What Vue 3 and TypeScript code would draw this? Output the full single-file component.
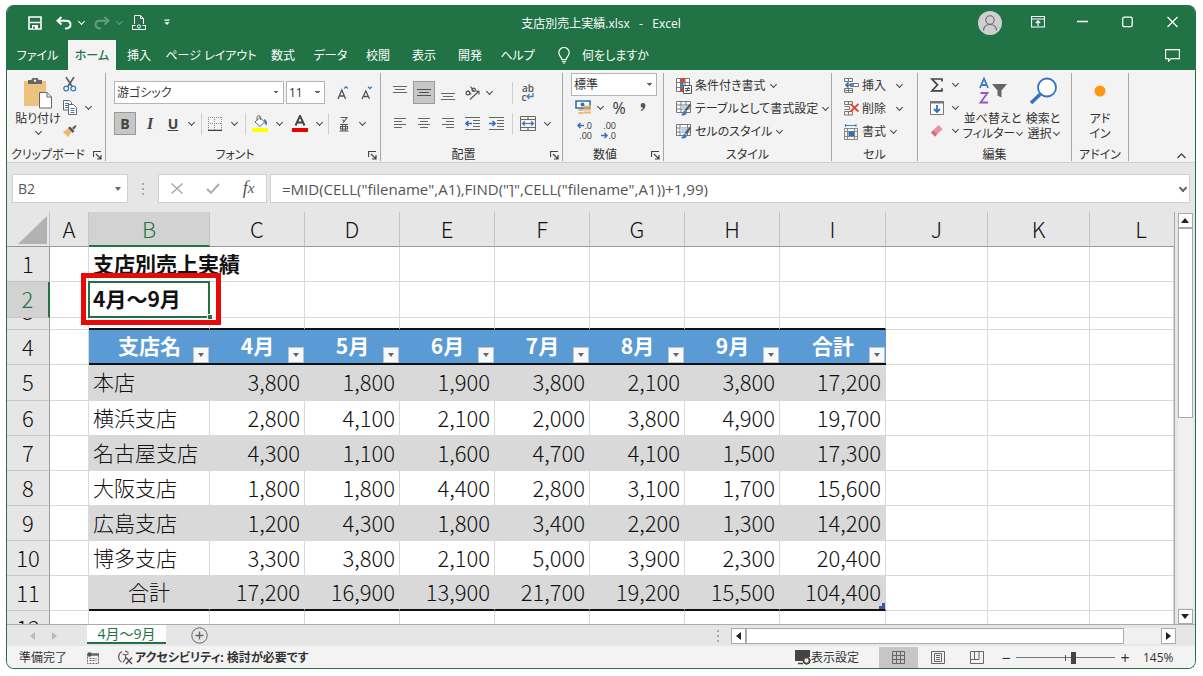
<script setup lang="ts">
import { ref } from 'vue'

interface Row {
  n: number
  cls: string
  cells: string[]
}

const tabs = [
  { label: 'ファイル', cls: 't-file' },
  { label: 'ホーム', cls: 't-home' },
  { label: '挿入', cls: 't-short' },
  { label: 'ページ レイアウト', cls: 't-layout' },
  { label: '数式', cls: 't-short' },
  { label: 'データ', cls: 't-mid' },
  { label: '校閲', cls: 't-short' },
  { label: '表示', cls: 't-short' },
  { label: '開発', cls: 't-short' },
  { label: 'ヘルプ', cls: 't-mid' },
]

const columns = ['A', 'B', 'C', 'D', 'E', 'F', 'G', 'H', 'I', 'J', 'K', 'L']
const blanks = ['', '', '']

const rows: Row[] = [
  { n: 1, cls: 'r-title', cells: ['支店別売上実績', '', '', '', '', '', '', ''] },
  { n: 2, cls: 'r-sub', cells: ['4月～9月', '', '', '', '', '', '', ''] },
  { n: 3, cls: 'r-thin', cells: ['', '', '', '', '', '', '', ''] },
  { n: 4, cls: 'r-head', cells: ['支店名', '4月', '5月', '6月', '7月', '8月', '9月', '合計'] },
  { n: 5, cls: 'r-data band first', cells: ['本店', '3,800', '1,800', '1,900', '3,800', '2,100', '3,800', '17,200'] },
  { n: 6, cls: 'r-data', cells: ['横浜支店', '2,800', '4,100', '2,100', '2,000', '3,800', '4,900', '19,700'] },
  { n: 7, cls: 'r-data band', cells: ['名古屋支店', '4,300', '1,100', '1,600', '4,700', '4,100', '1,500', '17,300'] },
  { n: 8, cls: 'r-data', cells: ['大阪支店', '1,800', '1,800', '4,400', '2,800', '3,100', '1,700', '15,600'] },
  { n: 9, cls: 'r-data band', cells: ['広島支店', '1,200', '4,300', '1,800', '3,400', '2,200', '1,300', '14,200'] },
  { n: 10, cls: 'r-data', cells: ['博多支店', '3,300', '3,800', '2,100', '5,000', '3,900', '2,300', '20,400'] },
  { n: 11, cls: 'r-data band total', cells: ['合計', '17,200', '16,900', '13,900', '21,700', '19,200', '15,500', '104,400'] },
  { n: 12, cls: 'r-last', cells: ['', '', '', '', '', '', '', ''] },
]

const cellName = ref('B2')
const formula = ref('=MID(CELL("filename",A1),FIND("]",CELL("filename",A1))+1,99)')
const zoom = ref(58)
</script>

<template>
  <div class="window">
    <header class="titlebar">
      <div class="quick">
        <button class="qa q-save" aria-label="上書き保存">
          <svg width="14" height="14" viewBox="0 0 14 14" fill="none" stroke="#fff" stroke-width="1.6"><path d="M1 1h12v12H1z" /><path d="M2 6.500h10" stroke-width="1.300" /><path d="M4 9h6v4H4z" fill="#fff" stroke="none" /><path d="M6 10.500v2.500" stroke="#217346" stroke-width="1.500" /></svg>
        </button>
        <button class="qa q-undo" aria-label="元に戻す">
          <svg width="16" height="14" viewBox="0 0 16 14" fill="none" stroke="#fff" stroke-width="2"><path d="M5.500 1L1.500 4.800l4 3.700M2 4.800h8c3 0 4.500 1.700 4.500 3.900S12.500 12.500 9 12.500" /></svg>
          <i class="chev light"></i>
        </button>
        <button class="qa q-undo faded" aria-label="やり直し">
          <svg width="16" height="14" viewBox="0 0 16 14" fill="none" stroke="#fff" stroke-width="2"><path d="M10.500 1l4 3.800-4 3.700M14 4.800H6C3 4.800 1.500 6.500 1.500 8.700S3.500 12.500 7 12.500" /></svg>
          <i class="chev light"></i>
        </button>
        <button class="qa q-doc" aria-label="印刷プレビュー">
          <svg width="14" height="16" viewBox="0 0 14 16" fill="none" stroke="#fff"><path d="M2.500 9V.5h6l3 3V9M8.500.5v3h3" /><path d="M.5 10v4.500h13V10M.5 10.500h3M10.500 10.500h3" /><circle cx="7" cy="11.500" r="1.600" /></svg>
        </button>
        <button class="qa q-more" aria-label="カスタマイズ">
          <svg width="6" height="7" viewBox="0 0 6 7"><path d="M.5.500h5v1.200h-5zM.3 3.200h5.400L3 6z" fill="#fff" /></svg>
        </button>
      </div>
      <div class="doc-title">支店別売上実績.xlsx&nbsp;&nbsp; -&nbsp;&nbsp; Excel</div>
      <div class="sysbtns">
        <button class="avatar" aria-label="アカウント">
          <svg width="24" height="24" viewBox="0 0 24 24" fill="none" stroke="#666" stroke-width="1.100"><circle cx="12" cy="12" r="12" fill="#cfcfcf" stroke="none" /><circle cx="12" cy="9" r="4.200" /><path d="M5.500 19.500c.3-4 3-6 6.500-6s6.200 2 6.500 6" /></svg>
        </button>
        <button class="sys" aria-label="リボンの表示オプション">
          <svg width="14" height="12" viewBox="0 0 14 12" fill="none" stroke="#fff"><path d="M.5.500h13v10.500H.5zM.5 3h13" stroke-width="1.200" /><path d="M7 10V5M4.800 7L7 4.800 9.200 7" stroke-width="1.200" /></svg>
        </button>
        <button class="sys" aria-label="最小化">
          <svg width="11" height="12" viewBox="0 0 11 12"><path d="M0 5.500h11" stroke="#fff" stroke-width="1.300" /></svg>
        </button>
        <button class="sys" aria-label="最大化">
          <svg width="11" height="12" viewBox="0 0 11 12"><rect x=".7" y="1.200" width="9.500" height="9.500" rx="1.500" fill="none" stroke="#fff" stroke-width="1.300" /></svg>
        </button>
        <button class="sys" aria-label="閉じる">
          <svg width="11" height="12" viewBox="0 0 11 12"><path d="M.5 1l10 10M10.500 1l-10 10" stroke="#fff" stroke-width="1.200" /></svg>
        </button>
      </div>
    </header>

    <nav class="tabs">
      <button v-for="t in tabs" :key="t.label" class="tab" :class="t.cls">{{ t.label }}</button>
      <button class="tell">
        <svg width="12" height="17" viewBox="0 0 12 17" fill="none" stroke="#fff" stroke-width="1.200"><path d="M3.800 12.500c0-2.500-3-3.500-3-6.800a5.200 5.200 0 0110.400 0c0 3.300-3 4.300-3 6.800zM4 14.300h4M4.700 16h2.600" /></svg>
        <span>何をしますか</span>
      </button>
      <button class="comment" aria-label="コメント">
        <svg width="15" height="13" viewBox="0 0 15 13" fill="none" stroke="#fff" stroke-width="1.100"><path d="M.6.600h13.800v9H6L3.500 12.300V9.600H.6z" /></svg>
      </button>
    </nav>

    <section class="ribbon">
      <div class="group g-clip">
        <div class="body">
          <button class="big paste">
            <svg width="28" height="31" viewBox="0 0 28 31"><path d="M0 3h22v25H0z" fill="#ecc27e" /><path d="M4 2h3.500a3.500 2.500 0 017 0H18v4H4z" fill="#666" /><circle cx="11" cy="2.800" r="1.200" fill="#eee" /><path d="M15.500 14.500h7.500l4.500 4.500v11h-12z" fill="#fff" stroke="#666" /><path d="M23 14.500V19h4.500" fill="none" stroke="#666" /></svg>
            <span>貼り付け</span>
            <i class="chev"></i>
          </button>
          <div class="stack">
            <button class="ic" aria-label="切り取り">
              <svg width="14" height="15" viewBox="0 0 14 15" fill="none"><path d="M3 0l6.500 10M11 0L4.500 10" stroke="#555" stroke-width="1.500" /><circle cx="3.200" cy="11.500" r="2.400" stroke="#3f7fbf" stroke-width="1.300" /><circle cx="10.300" cy="11.500" r="2.400" stroke="#3f7fbf" stroke-width="1.300" /></svg>
            </button>
            <button class="ic" aria-label="コピー">
              <svg width="14" height="15" viewBox="0 0 14 15" fill="#fff" stroke="#666"><path d="M.5.500h6l2 2V10h-8z" /><path d="M2 3.500h4M2 5.500h4M2 7.500h4" stroke="#3f7fbf" /><path d="M5.500 4.500h5l3 3v7h-8z" /><path d="M7.500 8.500h4M7.500 10.500h4M7.500 12.500h4" stroke="#3f7fbf" /></svg>
              <i class="chev"></i>
            </button>
            <button class="ic" aria-label="書式のコピー">
              <svg width="14" height="13" viewBox="0 0 14 13"><path d="M0 8l5-3.500 3.500 4L5 13z" fill="#ecb870" /><path d="M5 4l2-1.500 4.500 4.500L9.500 9z" fill="#555" /><path d="M9 4l3.500-3 1 1.300L11 5.500z" fill="#555" /></svg>
            </button>
          </div>
        </div>
        <div class="foot"><span>クリップボード</span><button class="launch" aria-label="クリップボードの設定"><svg width="9" height="9" viewBox="0 0 9 9" fill="none" stroke="#444"><path d="M.5 6V.5H8M3 3l4.500 4.500M8 4v4H4" stroke-width="1.200" /></svg></button></div>
      </div>

      <div class="group g-font">
        <div class="body lines">
          <div class="line">
            <select class="box font-name" aria-label="フォント"><option>游ゴシック</option></select>
            <select class="box font-size" aria-label="フォント サイズ"><option>11</option></select>
            <button class="ic w24 grow-first" aria-label="フォント サイズの拡大"><svg width="12" height="14" viewBox="0 0 12 14" fill="none"><path d="M1 13L4.800 4l3.800 9M2.500 10h4.700" stroke="#555" stroke-width="1.300" /><path d="M7 2.500L9 .8l2 1.700" stroke="#3f7fbf" stroke-width="1.400" /></svg></button>
            <button class="ic w24" aria-label="フォント サイズの縮小"><svg width="12" height="14" viewBox="0 0 12 14" fill="none"><path d="M1 13L4.800 5l3.800 8M2.500 10.500h4.700" stroke="#555" stroke-width="1.300" /><path d="M7 .800l2 1.700 2-1.700" stroke="#3f7fbf" stroke-width="1.400" /></svg></button>
          </div>
          <div class="line">
            <button class="ic w22 pressed letter"><b>B</b></button>
            <button class="ic w28 letter ital"><b>I</b></button>
            <button class="ic w18 letter under"><b>U</b></button>
            <button class="ic w18" aria-label="下線の種類"><i class="chev"></i></button>
            <span class="vsep"></span>
            <button class="ic w24" aria-label="罫線"><svg width="14" height="14" viewBox="0 0 14 14" fill="none" stroke="#888"><path d="M.5 0v13M6.500 0v13M13.500 0v13M0 .5h14M0 6.500h14" stroke-dasharray="1 1" /><path d="M0 13.300h14" stroke="#444" stroke-width="1.200" /></svg></button>
            <button class="ic w14" aria-label="罫線の種類"><i class="chev"></i></button>
            <span class="vsep c-sep"></span>
            <button class="ic w24 fill" aria-label="塗りつぶしの色"><svg width="16" height="17" viewBox="0 0 16 17"><path d="M3 7l5-4.500 4.500 4.500L8 11.500z" fill="#fff" stroke="#666" /><path d="M5 5V2.500a1.800 1.800 0 013.600 0V5" fill="none" stroke="#666" /><path d="M12 4c3 1 3.500 3.500 2.500 6.500-1.500-1-2.500-3-2.500-6.500z" fill="#3f7fbf" /><path d="M0 13h16v4H0z" fill="#ff0" /></svg></button>
            <button class="ic w14" aria-label="塗りつぶしの色の選択"><i class="chev"></i></button>
            <button class="ic w28" aria-label="フォントの色"><svg width="16" height="17" viewBox="0 0 16 17"><path d="M3.500 10.500L8 .8l4.500 9.700M5 7.500h6" fill="none" stroke="#444" stroke-width="1.900" /><path d="M0 13h16v4H0z" fill="#e80000" /></svg></button>
            <button class="ic w10" aria-label="フォントの色の選択"><i class="chev"></i></button>
            <span class="vsep c-sep"></span>
            <button class="ic w26" aria-label="ふりがな"><svg width="10" height="16" viewBox="0 0 10 16" fill="none" stroke="#555" stroke-width="1.100"><path d="M1.500 1.500h6.500L4 7M3.500 3.500L5.500 6M1 8.500h8M3.500 8.500v6M6.500 8.500v6M1.500 10.500h7v2.500h-7zM.5 15h9" /></svg></button>
            <button class="ic w10" aria-label="ふりがなの設定"><i class="chev"></i></button>
          </div>
        </div>
        <div class="foot"><span>フォント</span><button class="launch" aria-label="フォントの設定"><svg width="9" height="9" viewBox="0 0 9 9" fill="none" stroke="#444"><path d="M.5 6V.5H8M3 3l4.500 4.500M8 4v4H4" stroke-width="1.200" /></svg></button></div>
      </div>

      <div class="group g-align">
        <div class="body lines">
          <div class="line">
            <button class="ic w24" aria-label="上揃え"><svg width="14" height="14" viewBox="0 0 14 14" stroke="#666"><path d="M0 .5h14M2 3.500h10M0 6.500h14" /></svg></button>
            <button class="ic w24 pressed" aria-label="上下中央揃え"><svg width="14" height="14" viewBox="0 0 14 14" stroke="#555"><path d="M0 3.500h14M2 6.500h10M0 9.500h14" /></svg></button>
            <button class="ic w24" aria-label="下揃え"><svg width="14" height="14" viewBox="0 0 14 14" stroke="#666"><path d="M0 7.500h14M2 10.500h10M0 13.500h14" /></svg></button>
            <button class="ic w24" aria-label="方向"><svg width="15" height="14" viewBox="0 0 15 14" fill="none" stroke="#555" stroke-width="1.200"><path d="M5 13.500L14 5M14 5h-3.500M14 5v3.500" /><circle cx="3" cy="7" r="1.900" /><path d="M3 4.500l3.200 4M5.500.500l3.500 5" /><circle cx="8.700" cy="3.800" r="1.700" /></svg></button>
            <button class="ic w10" aria-label="方向の選択"><i class="chev"></i></button>
            <span class="vsep a-sep"></span>
            <button class="ic w28 wrap" aria-label="折り返して全体を表示する"><span>ab</span><span>c<svg width="8" height="7" viewBox="0 0 8 7" fill="none" stroke="#3f7fbf" stroke-width="1.300"><path d="M7 0v3.500H1M3.500 1L1 3.500 3.500 6" /></svg></span></button>
          </div>
          <div class="line">
            <button class="ic w24" aria-label="左揃え"><svg width="12" height="11" viewBox="0 0 12 11" stroke="#666"><path d="M0 .5h12M0 3.500h8M0 6.500h12M0 9.500h8" /></svg></button>
            <button class="ic w24" aria-label="中央揃え"><svg width="12" height="11" viewBox="0 0 12 11" stroke="#666"><path d="M0 .5h12M2 3.500h8M0 6.500h12M2 9.500h8" /></svg></button>
            <button class="ic w24" aria-label="右揃え"><svg width="12" height="11" viewBox="0 0 12 11" stroke="#666"><path d="M0 .5h12M4 3.500h8M0 6.500h12M4 9.500h8" /></svg></button>
            <button class="ic w24" aria-label="インデントを減らす"><svg width="15" height="13" viewBox="0 0 15 13" fill="none" stroke="#666"><path d="M0 .5h15M8 3.500h7M8 6.500h7M8 9.500h7M0 12.500h15" /><path d="M7 6.500H1M3.500 4L1 6.500 3.500 9" stroke="#2f6fb5" stroke-width="1.700" /></svg></button>
            <button class="ic w24" aria-label="インデントを増やす"><svg width="15" height="13" viewBox="0 0 15 13" fill="none" stroke="#666"><path d="M0 .5h15M8 3.500h7M8 6.500h7M8 9.500h7M0 12.500h15" /><path d="M0 6.500h6M3.500 4L6 6.500 3.500 9" stroke="#2f6fb5" stroke-width="1.700" /></svg></button>
            <span class="vsep b-sep"></span>
            <button class="ic w28" aria-label="セルを結合して中央揃え"><svg width="16" height="15" viewBox="0 0 16 15" fill="none" stroke="#666"><path d="M.5.500h15v14H.5zM.5 3.500h15M.5 11.500h15M8 .5v3M8 11.500v3" /><path d="M2.500 7.500h11M5 5.500l-2.500 2 2.500 2M11 5.500l2.500 2-2.500 2" stroke="#2f6fb5" stroke-width="1.200" /></svg></button>
            <button class="ic w10" aria-label="結合の選択"><i class="chev"></i></button>
          </div>
        </div>
        <div class="foot"><span>配置</span><button class="launch" aria-label="配置の設定"><svg width="9" height="9" viewBox="0 0 9 9" fill="none" stroke="#444"><path d="M.5 6V.5H8M3 3l4.500 4.500M8 4v4H4" stroke-width="1.200" /></svg></button></div>
      </div>

      <div class="group g-num">
        <div class="body thirds">
          <select class="box num-format" aria-label="数値の書式"><option>標準</option></select>
          <div class="line3">
            <button class="ic w24" aria-label="通貨表示形式"><svg width="16" height="15" viewBox="0 0 16 15" fill="none"><path d="M1 1h14v7H1z" stroke="#2f6fb5" stroke-width="1.600" fill="#fff" /><circle cx="7.500" cy="4.500" r="2" fill="#2f6fb5" /><path d="M9 5.500h7v2H9zM9 8.500h7v2H9zM9 11.500h7v2H9zM3.500 9h5v2h-5zM3.500 12h5v2h-5z" fill="#ecb870" /></svg></button>
            <button class="ic w10" aria-label="通貨の選択"><i class="chev"></i></button>
            <button class="ic w28 pct">%</button>
            <button class="ic w20" aria-label="桁区切りスタイル"><svg width="6" height="9" viewBox="0 0 6 9"><path d="M3 0a2.400 2.400 0 012.400 2.600C5.400 5.500 3.500 7.500 1 8l-.3-1C2 6.500 2.800 5.700 3 4.800A2.400 2.400 0 113 0z" fill="#555" /></svg></button>
          </div>
          <div class="line3">
            <button class="ic w24 dec"><span><svg width="7" height="7" viewBox="0 0 7 7" fill="none" stroke="#2f6fb5" stroke-width="1.500"><path d="M7 3.500H1M3.500 1L1 3.500 3.500 6" /></svg>.0</span><span>.00</span></button>
            <button class="ic w24 dec"><span>.00</span><span><svg width="7" height="7" viewBox="0 0 7 7" fill="none" stroke="#2f6fb5" stroke-width="1.500"><path d="M0 3.500h6M3.500 1L6 3.500 3.500 6" /></svg>.0</span></button>
          </div>
        </div>
        <div class="foot"><span>数値</span><button class="launch" aria-label="数値の設定"><svg width="9" height="9" viewBox="0 0 9 9" fill="none" stroke="#444"><path d="M.5 6V.5H8M3 3l4.500 4.500M8 4v4H4" stroke-width="1.200" /></svg></button></div>
      </div>

      <div class="group g-style">
        <div class="body thirds">
          <button class="row-btn"><svg width="16" height="16" viewBox="0 0 16 16" fill="none" stroke="#777"><path d="M.5.500h13v13H.5zM.5 4.500h13M.5 9.500h13M4.500.500v13M9 .5v13" fill="#fff" /><path d="M4.500 0v4.500H9V0zM4.500 9.500h3v4h-3z" fill="#d9482b" stroke="none" /><path d="M4.500 4.500h3v5h-3z" fill="#3f7fbf" stroke="none" /><path d="M7.500 7.500h8v8h-8z" fill="#fff" stroke="#555" /><path d="M9 10.500h5M9 12.500h5M12.500 9l-2 5" stroke="#555" /></svg><span>条件付き書式</span><i class="chev"></i></button>
          <button class="row-btn"><svg width="16" height="16" viewBox="0 0 16 16" fill="none" stroke="#777"><path d="M.5.500h14v11H.5zM.5 4h14M.5 8h14M5 .5v11M10 .5v11" fill="#fff" /><path d="M5 4.500h7V8H5z" fill="#b9d4ef" stroke="none" /><path d="M14.500 3.500L9.500 9.500" stroke="#555" stroke-width="2" /><path d="M5 14c1.500-.5 1.500-4 4-4.500l2 2c-.5 2.500-3 4-6 2.500z" fill="#3f7fbf" stroke="none" /></svg><span>テーブルとして書式設定</span><i class="chev"></i></button>
          <button class="row-btn"><svg width="16" height="16" viewBox="0 0 16 16" fill="none" stroke="#777"><path d="M.5.500h14v11H.5zM.5 4h14M.5 8h14M4 .5v11M11.500 .5v11" fill="#fff" /><path d="M4 3.500h7.500V8.500H4z" fill="#b9d4ef" stroke="none" /><path d="M14.500 3.500L9.500 9.500" stroke="#555" stroke-width="2" /><path d="M5 14c1.500-.5 1.500-4 4-4.500l2 2c-.5 2.500-3 4-6 2.500z" fill="#3f7fbf" stroke="none" /></svg><span>セルのスタイル</span><i class="chev"></i></button>
        </div>
        <div class="foot"><span>スタイル</span></div>
      </div>

      <div class="group g-cell">
        <div class="body thirds">
          <button class="row-btn"><svg width="15" height="15" viewBox="0 0 15 15" fill="none" stroke="#777"><path d="M.5.500h8v3h-8zM4.500.500v3M.5 10.500h8v4h-8zM4.500 10.500v4M.5 12.500h8" /><path d="M6.500 5.500h8v3h-8z" fill="#fff" /><path d="M10 7H2M4.500 4.500L2 7l2.500 2.500" stroke="#2f6fb5" stroke-width="1.600" /></svg><span>挿入</span><i class="chev far"></i></button>
          <button class="row-btn"><svg width="15" height="15" viewBox="0 0 15 15" fill="none" stroke="#777"><path d="M.5.500h8v3h-8zM4.500.500v3M.5 10.500h8v3.500h-8zM4.500 10.500v3.500M.5 5.500h5v3h-5" /><path d="M6.500 3l8 7.500M14.500 3l-8 7.500" stroke="#d9482b" stroke-width="1.800" /></svg><span>削除</span><i class="chev far"></i></button>
          <button class="row-btn"><svg width="15" height="16" viewBox="0 0 15 16" fill="none" stroke="#888"><path d="M1 1.500h11M1.500 0v3M12 0v3" stroke="#3f7fbf" /><path d="M.5 4.500h13v11H.5zM.5 7.500h13M.5 12.500h13M3.500 4.500v11M10.500 4.500v11" /><path d="M4.500 7.500h5.500v4.500h-5.500z" fill="#2f6fb5" stroke="none" /></svg><span>書式</span><i class="chev"></i></button>
        </div>
        <div class="foot"><span>セル</span></div>
      </div>

      <div class="group g-edit">
        <div class="body">
          <div class="stack">
            <button class="ic" aria-label="合計"><svg width="14" height="14" viewBox="0 0 14 14" fill="none" stroke="#444" stroke-width="1.700"><path d="M12 3.500V1H2l5.500 5.800L2 12.800h10v-2.500" /></svg><i class="chev"></i></button>
            <button class="ic" aria-label="フィル"><svg width="14" height="14" viewBox="0 0 14 14" fill="none"><path d="M.5.500h13v13H.5z" stroke="#777" fill="#fff" /><path d="M0 1.500h14" stroke="#777" stroke-width="2" /><path d="M7 4v7M4 8l3 3 3-3" stroke="#2f6fb5" stroke-width="1.800" /></svg><i class="chev"></i></button>
            <button class="ic" aria-label="クリア"><svg width="14" height="14" viewBox="0 0 14 14"><path d="M1 8.500L8.500 1l4 4L5 12.500z" fill="#e98fa0" /><path d="M1 8.500l2-2 4 4-2 2z" fill="#d8637d" /></svg><i class="chev"></i></button>
          </div>
          <button class="big sort">
            <svg width="29" height="28" viewBox="0 0 29 28" fill="none"><path d="M2 11L6 1.500 10 11M3.300 8h5.400" stroke="#3f7fbf" stroke-width="1.800" /><path d="M2.500 16h7L2.500 25.500h7.500" stroke="#9557c2" stroke-width="1.800" /><path d="M14 7h15l-5.500 6.500v7l-4-2v-5z" fill="#666" /></svg>
            <span>並べ替えと</span>
            <span>フィルター <i class="chev"></i></span>
          </button>
          <button class="big find">
            <svg width="29" height="28" viewBox="0 0 29 28" fill="none" stroke="#2f74bd"><circle cx="18" cy="10.500" r="9" fill="#fff" stroke-width="1.800" /><path d="M11.500 17L2 26" stroke-width="3.600" /></svg>
            <span>検索と</span>
            <span>選択 <i class="chev"></i></span>
          </button>
        </div>
        <div class="foot"><span>編集</span></div>
      </div>

      <div class="group g-addin">
        <div class="body">
          <button class="big addin">
            <svg width="12" height="28" viewBox="0 0 12 28"><circle cx="6" cy="14" r="5.500" fill="#ff9811" /></svg>
            <span>アド</span>
            <span>イン</span>
          </button>
        </div>
        <div class="foot"><span>アドイン</span></div>
      </div>
      <button class="collapse" aria-label="リボンを折りたたむ"><svg width="9" height="6" viewBox="0 0 9 6" fill="none" stroke="#444" stroke-width="1.300"><path d="M.5 5L4.500 1l4 4" /></svg></button>
    </section>

    <section class="fbar">
      <div class="namebox">
        <input v-model="cellName" aria-label="名前ボックス" />
        <button aria-label="名前の一覧"><i class="tri"></i></button>
      </div>
      <span class="dots"></span>
      <div class="fxbox">
        <button aria-label="キャンセル"><svg width="12" height="11" viewBox="0 0 12 11" stroke="#aaa" stroke-width="1.500"><path d="M.5.500l11 10M11.500.500l-11 10" /></svg></button>
        <button aria-label="入力"><svg width="14" height="11" viewBox="0 0 14 11" fill="none" stroke="#aaa" stroke-width="1.900"><path d="M1 6l4 3.800L13 1" /></svg></button>
        <button class="fx"><i>f</i><i class="small">x</i></button>
      </div>
      <div class="formula">
        <input v-model="formula" aria-label="数式バー" />
        <button aria-label="数式バーの展開"><i class="chev bold"></i></button>
      </div>
    </section>

    <main class="sheet">
      <div class="gridwrap">
        <table class="grid">
          <colgroup>
            <col class="c-row" /><col class="c-a" /><col class="c-b" />
            <col v-for="k in 6" :key="k" class="c-m" />
            <col class="c-i" /><col class="c-j" /><col class="c-j" /><col />
          </colgroup>
          <thead>
            <tr>
              <th class="corner"><svg width="29" height="28" viewBox="0 0 29 28"><path d="M29 0v28H0z" fill="#b2b2b2" /></svg></th>
              <th v-for="c in columns" :key="c" scope="col" :class="{ sel: c === 'B', lastcol: c === 'L' }">{{ c }}</th>
            </tr>
          </thead>
          <tbody>
            <tr v-for="r in rows" :key="r.n" :class="r.cls">
              <th scope="row"><div class="in">{{ r.n }}</div></th>
              <td></td>
              <td v-for="(v, i) in r.cells" :key="i" class="t">
                <div class="in">{{ v }}</div>
                <button v-if="r.n === 4" class="filter" :aria-label="v + 'の絞り込み'"><i class="tri"></i></button>
                <template v-if="r.n === 2 && i === 0">
                  <span class="cursor"></span>
                  <span class="handle"></span>
                  <span class="mark"></span>
                </template>
                <svg v-if="r.n === 11 && i === 7" class="corner-mark" width="6" height="6" viewBox="0 0 6 6"><path d="M3 0h3v6H0V3h3z" fill="#4454a5" /></svg>
              </td>
              <td v-for="(b, i) in blanks" :key="'b' + i">{{ b }}</td>
            </tr>
          </tbody>
        </table>
      </div>
      <div class="vscroll">
        <button aria-label="上へ"><i class="arrow up"></i></button>
        <div class="track"><div class="thumb"></div></div>
        <button aria-label="下へ"><i class="arrow down"></i></button>
      </div>
    </main>

    <section class="sheetbar">
      <button class="nav" aria-label="前のシート"><i class="arrow left dim"></i></button>
      <button class="nav" aria-label="次のシート"><i class="arrow right dim"></i></button>
      <button class="sheet-tab">4月～9月</button>
      <button class="add" aria-label="新しいシート"><svg width="17" height="17" viewBox="0 0 17 17" fill="none" stroke="#666"><circle cx="8.500" cy="8.500" r="7.700" /><path d="M8.500 4.500v8M4.500 8.500h8" stroke-width="1.400" /></svg></button>
      <span class="dots"></span>
      <div class="hscroll">
        <button aria-label="左へ"><i class="arrow left"></i></button>
        <div class="htrack"><div class="hthumb"></div></div>
        <button aria-label="右へ"><i class="arrow right"></i></button>
      </div>
    </section>

    <footer class="status">
      <span class="ready">準備完了</span>
      <svg class="macro" width="12" height="12" viewBox="0 0 12 12" fill="none" stroke="#666"><path d="M.5 2.500h11v9H.5zM2.500 6.500h7M2.500 8.500h7" stroke-dasharray="2 1" /><path d="M4 2.500h8" stroke-width="2.500" /><circle cx="2.500" cy="2.500" r="2.300" fill="#555" stroke="none" /></svg>
      <button class="a11y">
        <svg width="17" height="15" viewBox="0 0 17 15" fill="none" stroke="#555" stroke-width="1.100"><path d="M5 1.500A6 6 0 004.500 12M8 1a6 6 0 013.500 2" /><path d="M5.500 4l3 1 3-1M8.500 5v3.500L6 12.500" /><path d="M9 7.500l6 6.500M15 7.500L9 14" stroke-width="1.500" /></svg>
        <span>アクセシビリティ: 検討が必要です</span>
      </button>
      <button class="display">
        <svg width="16" height="15" viewBox="0 0 16 15"><path d="M0 0h15v7H9v4H0z" fill="#444" /><path d="M3 13.500h5" stroke="#444" stroke-width="1.500" /><circle cx="11.500" cy="10.500" r="3" fill="#f3f3f3" stroke="#444" stroke-width="1.500" /><path d="M11.500 6.300v2M11.500 13v2M7.500 10.500h2M13.800 10.500h2M8.800 7.800l1 1M13.500 12.500l1 1M14.200 7.800l-1 1M8.800 13.200l1-1" stroke="#444" stroke-width="1.300" /></svg>
        <span>表示設定</span>
      </button>
      <button class="view on" aria-label="標準"><svg width="13" height="13" viewBox="0 0 13 13" fill="none" stroke="#666"><path d="M.5.500h12v12H.5zM.5 4.500h12M.5 8.500h12M4.500.500v12M8.500.500v12" /></svg></button>
      <button class="view" aria-label="ページ レイアウト"><svg width="14" height="13" viewBox="0 0 14 13" fill="none" stroke="#666"><path d="M.5.500h13v12H.5zM3.500 2.500h7v8h-7zM5 4.500h4M5 6.500h4M5 8.500h4" /></svg></button>
      <button class="view" aria-label="改ページ プレビュー"><svg width="14" height="13" viewBox="0 0 14 13" fill="none" stroke="#666"><path d="M.5.500h13v12H.5zM.5 8.500h8.500V.5M4.500.500v8" /></svg></button>
      <button class="zm">−</button>
      <input v-model="zoom" class="range" type="range" min="0" max="100" aria-label="ズーム" />
      <button class="zm">+</button>
      <span class="pct145">145%</span>
    </footer>
  </div>
</template>

<style>
html, body, #app { height: 100%; }
body { margin: 0; background: #fff; }
#app { display: flow-root; }
</style>

<style scoped>
* { box-sizing: border-box; }
.window {
  --green: #217346;
  height: calc(100% - 12px);
  margin: 5px 7px 7px 6px;
  border: 1px solid var(--green);
  border-top: 0;
  border-radius: 8px;
  overflow: hidden;
  display: flex;
  flex-direction: column;
  background: #e6e6e6;
  color: #333;
  font: 12px/16px "Open Sans", "Noto Sans CJK JP", sans-serif;
  font-feature-settings: "palt";
}
button, input, select { font: inherit; font-feature-settings: inherit; color: inherit; border: 0; padding: 0; margin: 0; background: none; }
button { display: flex; align-items: center; justify-content: center; white-space: nowrap; flex: none; }
svg { display: block; flex: none; }
input { min-width: 0; outline: 0; }

.chev { width: 5px; height: 5px; flex: none; border: solid #444; border-width: 0 1px 1px 0; transform: translateY(-1px) rotate(45deg); display: inline-block; }
.chev.light { border-color: #fff; }
.chev.bold { border-width: 0 2px 2px 0; width: 6px; height: 6px; border-color: #666; }
.tri { border: 3px solid transparent; border-top: 4px solid #666; border-bottom: 0; }
.arrow { border: 4px solid transparent; }
.arrow.up { border-bottom: 5px solid #222; border-top: 0; }
.arrow.down { border-top: 5px solid #222; border-bottom: 0; }
.arrow.left { border-right: 5px solid #222; border-left: 0; }
.arrow.right { border-left: 5px solid #222; border-right: 0; }
.arrow.left.dim { border-right-color: #bbb; }
.arrow.right.dim { border-left-color: #bbb; }

.titlebar { background: var(--green); color: #fff; height: 35px; flex: none; display: grid; grid-template-columns: 1fr auto 1fr; align-items: center; }
.quick { display: flex; align-items: center; padding-left: 21px; }
.qa { height: 24px; gap: 7px; }
.q-save { margin-right: 14px; }
.q-undo { margin-right: 10px; }
.q-doc { margin: 0 18px 0 0; }
.faded { opacity: .3; }
.doc-title { padding-top: 2px; }
.sysbtns { display: flex; justify-content: flex-end; align-items: center; }
.sys { width: 45px; height: 32px; padding-bottom: 2px; }
.avatar { margin-right: 13px; }

.tabs { background: var(--green); color: #fff; height: 30px; flex: none; display: flex; align-items: stretch; }
.tab { height: 30px; padding-top: 1px; }
.t-file { width: 61px; }
.t-home { width: 48px; background: #f3f3f3; color: var(--green); font-weight: 500; }
.t-short { width: 46px; }
.t-mid { width: 49px; }
.t-layout { width: 98px; }
.tell { margin-left: 16px; gap: 12px; padding-top: 1px; }
.comment { margin-left: auto; width: 46px; }

.ribbon { background: #f3f3f3; height: 93px; flex: none; display: flex; border-bottom: 1px solid #d0d0d0; }
.group { margin: 3px 0 1px; border-right: 1px solid #a8a8a8; display: flex; flex-direction: column; flex: none; }
.body { flex: 1; display: flex; }
.foot { height: 12px; display: flex; align-items: center; line-height: 12px; }
.foot span { flex: 1; text-align: center; white-space: nowrap; }
.launch { width: 16px; height: 12px; }
.g-clip { width: 99px; }
.g-font { width: 275px; }
.g-align { width: 182px; }
.g-num { width: 101px; }
.g-style { width: 168px; }
.g-cell { width: 86px; }
.g-edit { width: 154px; }
.g-addin { width: 57px; }
.big { flex-direction: column; justify-content: flex-start; line-height: 15px; }
.big span { display: flex; align-items: center; gap: 2px; }
.paste { width: 46px; margin: 5px 2px 0 8px; }
.paste span { margin: 2px 0 4px; }
.stack { display: flex; flex-direction: column; align-items: flex-start; width: 38px; }
.stack .ic { height: 23px; gap: 9px; }
.ic { height: 23px; }
.w10 { width: 10px; } .w14 { width: 14px; } .w18 { width: 18px; } .w20 { width: 20px; } .w22 { width: 22px; }
.w24 { width: 24px; } .w26 { width: 26px; } .w28 { width: 28px; }
.lines { flex-direction: column; padding: 8px 0 0 7px; gap: 8px; }
.g-font .lines { padding-left: 8px; }
.line, .line3 { display: flex; align-items: center; height: 23px; }
.thirds { flex-direction: column; padding: 0 0 0 8px; }
.box {
  flex: none; height: 23px; border: 1px solid #b5b5b5; padding: 0 14px 0 2px; appearance: none; border-radius: 0;
  background: #fff conic-gradient(from -45deg at 50% 100%, #666 90deg, transparent 0) no-repeat right 4px center / 6px 3px;
}
.font-name { width: 170px; margin-right: 2px; }
.font-size { width: 39px; }
.grow-first { margin-left: 6px; }
.num-format { width: 86px; }
.pressed { background: #c6c6c6; border: 1px solid #999; }
.g-align .pressed { width: 22px; margin: 0 1px; }
.letter { font-size: 14px; color: #444; }
.ital b { font-family: "Liberation Serif", serif; font-style: italic; font-size: 16px; }
.under b { text-decoration: underline; }
.vsep { width: 1px; height: 22px; background: #d0d0d0; margin: 0 1px; flex: none; }
.a-sep { margin: 0 1px 0 18px; }
.b-sep { margin: 0 1px 0 4px; }
.c-sep { margin: 0 2px 0 4px; }
.wrap { flex-direction: column; line-height: 9px; font-size: 10px; font-weight: 600; color: #555; }
.wrap span { display: flex; }
.pct { font-size: 16px; }
.dec { flex-direction: column; font-size: 9px; line-height: 10px; align-items: flex-end; padding-right: 3px; }
.dec span { display: flex; align-items: center; }
.row-btn { height: 23px; justify-content: flex-start; gap: 3px; }
.row-btn .chev { margin-left: 2px; }
.row-btn .far { margin-left: 8px; }
.g-style .thirds { padding: 1px 0 0 12px; }
.g-cell .thirds { padding: 1px 0 0 12px; }
.g-edit .stack { padding-left: 12px; width: 44px; }
.g-edit .sort { width: 61px; margin-top: 4px; }
.g-edit .find { width: 40px; margin-top: 4px; }
.big.sort svg, .big.find svg, .addin svg { margin-bottom: 6px; }
.addin { width: 56px; margin-top: 4px; }
.collapse { width: 24px; height: 14px; margin: 79px 2px 0 auto; }

.fbar { height: 49px; flex: none; display: flex; padding: 11px 5px 9px; align-items: stretch; font-size: 14px; }
.namebox, .fxbox, .formula { background: #fff; border: 1px solid #d0d0d0; display: flex; align-items: center; }
.namebox { width: 116px; padding: 0 4px 0 5px; }
.namebox input { flex: 1; color: #555; }
.namebox button { width: 10px; }
.dots { width: 2px; height: 12px; background: repeating-linear-gradient(#aaa 0 2px, transparent 2px 5px); align-self: center; flex: none; }
.fbar .dots { margin: 0 14px; }
.fxbox { width: 109px; justify-content: space-around; margin-right: 3px; }
.fx { font: 18px "Liberation Serif", serif; color: #555; }
.fx .small { font-size: 15px; }
.formula { flex: 1; padding: 0 3px 0 11px; font-size: 15px; }
.formula input { flex: 1; color: #555; }

.sheet { flex: 1; min-height: 0; display: flex; font-family: "Noto Sans CJK JP", sans-serif; font-feature-settings: normal; }
.gridwrap { flex: 1; min-width: 0; overflow: hidden; border-right: 1px solid #aaa; }
.grid { table-layout: fixed; width: 100%; border-collapse: separate; border-spacing: 0; font-size: 22px; line-height: 24px; font-weight: 300; color: #111; }
.c-row { width: 43px; } .c-a { width: 39px; } .c-b { width: 121px; } .c-m { width: 95px; } .c-i { width: 106px; } .c-j { width: 102px; }
th { font-weight: 300; padding: 0; }
td { padding: 0; position: relative; background: #fff; border: solid #d9d9d9; border-width: 0 1px 1px 0; }
thead th { height: 35px; padding-bottom: 2px; background: #e6e6e6; border-bottom: 1px solid #999; border-right: 1px solid #c4c4c4; }
thead th.sel { background: #d2d2d2; color: var(--green); border-bottom: 2px solid var(--green); }
thead th.lastcol { padding-left: 18px; border-right: 0; }
thead .corner { padding: 0; }
.corner svg { margin: 3px 0 2px 11px; }
tbody th { background: #e6e6e6; border-right: 1px solid #999; border-bottom: 1px solid #c4c4c4; }
.in { height: 34px; padding: 0 0 3px; display: flex; align-items: center; white-space: nowrap; }
th .in { justify-content: center; }
td .in { padding: 0 4px 3px; }
.r-title td, .r-sub td { font-weight: 700; font-size: 21px; }
.r-title td.t:nth-child(3) { z-index: 2; border-right-color: #fff; }
.r-sub .in, .first .in { height: 35px; }
.r-sub th { background: #d2d2d2; color: var(--green); border-right: 2px solid var(--green); }
.r-sub td:nth-child(3) { z-index: 3; }
.r-thin .in { height: 11px; overflow: hidden; align-items: flex-end; padding-bottom: 7px; }
.r-thin .t .in { height: 10px; }
.r-thin .t { border-bottom: 2px solid #111; }
.r-head .t { background: #5b9bd5; color: #fff; font-weight: 700; font-size: 21px; border-right: 0; border-bottom: 2px solid #111; }
.r-head .t .in { height: 33px; justify-content: center; }
.r-data .t .in { justify-content: flex-end; }
.r-data .t:nth-child(3) { font-size: 21px; }
.r-data .t:nth-child(3) .in { justify-content: flex-start; }
.r-data.total .t:nth-child(3) .in { justify-content: center; }
.band .t { background: #d9d9d9; }
.total .t { border-bottom: 2px solid #111; }
.total .t .in { height: 33px; }
.filter { position: absolute; right: 1px; bottom: 0; width: 16px; height: 16px; background: #f8f9fb; border: 1px solid #bcc5d0; }
.cursor { position: absolute; inset: -1px; border: 2px solid var(--green); }
.handle { position: absolute; right: -3px; bottom: -2px; width: 5px; height: 5px; background: var(--green); border: solid #fff; border-width: 1px 0 0 1px; }
.mark { position: absolute; inset: -9px -12px -8px -8px; border: 5px solid #e60a0a; }
.corner-mark { position: absolute; right: 0; bottom: 0; }

.vscroll { width: 20px; flex: none; display: flex; flex-direction: column; align-items: center; }
.vscroll button { width: 15px; height: 15px; background: #fff; border: 1px solid #aaa; margin-top: 1px; }
.track { flex: 1; width: 15px; background: #f0f0f0; }
.thumb { height: 50%; background: #fff; border: 1px solid #aaa; }

.sheetbar { height: 22px; flex: none; display: flex; align-items: center; border-top: 1px solid #aaa; }
.nav { width: 22px; }
.nav:first-child { margin-left: 14px; }
.sheet-tab { width: 79px; height: 19px; margin: 0 25px 2px 22px; background: #fff; color: var(--green); border-bottom: 2px solid var(--green); font-size: 14px; align-self: flex-start; }
.sheetbar .dots { margin-left: auto; }
.hscroll { width: 445px; margin: 0 19px 0 12px; display: flex; height: 16px; }
.hscroll button { width: 15px; height: 16px; background: #fff; border: 1px solid #aaa; }
.htrack { flex: 1; background: #f0f0f0; }
.hthumb { width: 91%; height: 16px; background: #fff; border: 1px solid #aaa; }

.status { height: 22px; flex: none; background: #f3f3f3; display: flex; align-items: center; padding: 1px 17px 0 12px; }
.macro { margin: 0 18px 0 20px; }
.a11y { font-weight: 700; gap: 1px; }
.display { margin-left: auto; margin-right: 20px; }
.view { width: 39px; height: 22px; }
.on { background: #c6c6c6; }
.zm { width: 12px; font-size: 16px; margin-left: 4px; }
.range { appearance: none; width: 99px; height: 14px; margin: 0 0 0 4px; background: linear-gradient(#555, #555) no-repeat center / 1px 6px, linear-gradient(#777, #777) no-repeat center / 100% 1px; }
.range::-webkit-slider-thumb { appearance: none; width: 5px; height: 12px; background: #444; }
.pct145 { margin-left: 12px; width: 35px; }
</style>
